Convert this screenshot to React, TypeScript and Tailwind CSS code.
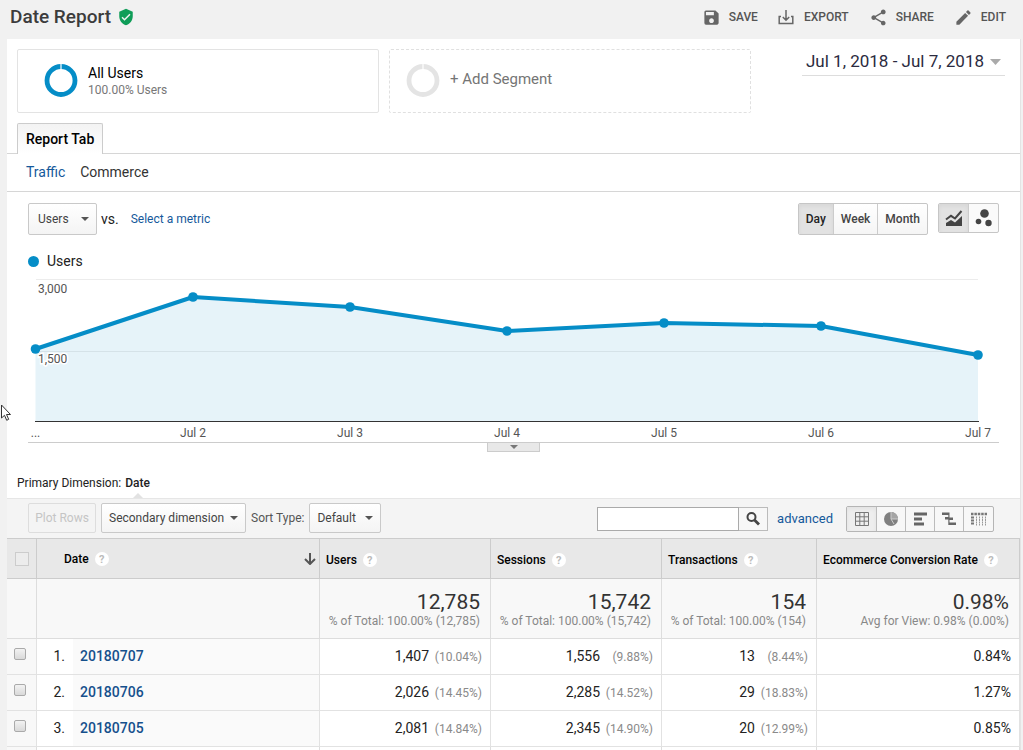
import React from "react";
import { MdSave, MdShare, MdEdit, MdVerifiedUser } from "react-icons/md";

const points = [
  { label: "...", x: 7.5, y: 75 },
  { label: "Jul 2", x: 165, y: 23 },
  { label: "Jul 3", x: 322, y: 33 },
  { label: "Jul 4", x: 479, y: 57 },
  { label: "Jul 5", x: 636, y: 49 },
  { label: "Jul 6", x: 793, y: 52 },
  { label: "Jul 7", x: 950, y: 81 },
];

const metrics = [
  { name: "Users", total: "12,785", note: "% of Total: 100.00% (12,785)" },
  { name: "Sessions", total: "15,742", note: "% of Total: 100.00% (15,742)" },
  { name: "Transactions", total: "154", note: "% of Total: 100.00% (154)" },
  { name: "Ecommerce Conversion Rate", total: "0.98%", note: "Avg for View: 0.98% (0.00%)" },
];

const rows = [
  { date: "20180707", cells: [["1,407", "(10.04%)"], ["1,556", "(9.88%)"], ["13", "(8.44%)"]], rate: "0.84%" },
  { date: "20180706", cells: [["2,026", "(14.45%)"], ["2,285", "(14.52%)"], ["29", "(18.83%)"]], rate: "1.27%" },
  { date: "20180705", cells: [["2,081", "(14.84%)"], ["2,345", "(14.90%)"], ["20", "(12.99%)"]], rate: "0.85%" },
];

function Ring({ color }: { color: string }) {
  return (
    <svg viewBox="0 0 34 34" className="h-[34px] w-[34px] shrink-0" fill="none" aria-hidden="true">
      <circle cx="17" cy="16.500" r="14" stroke={color} strokeWidth="4.800" />
      <path d="M17 0v6" stroke="#fff" strokeWidth="1.2" />
    </svg>
  );
}

function Caret({ className }: { className: string }) {
  return (
    <svg viewBox="0 0 10 5" className={className} preserveAspectRatio="none" aria-hidden="true">
      <path d="M0 0h10L5 5z" fill="currentColor" />
    </svg>
  );
}

function Dropdown({ id, label, value, className }: { id: string; label?: string; value: string; className: string }) {
  return (
    <div className="relative">
      <select
        id={id}
        aria-label={label}
        className={`appearance-none rounded-xs border border-[#c9c9c9] bg-linear-to-b from-white to-[#f4f4f4] pr-5 text-[#444] ${className}`}
      >
        <option>{value}</option>
      </select>
      <Caret className="pointer-events-none absolute top-1/2 right-2 -mt-0.5 h-1 w-2 text-[#555]" />
    </div>
  );
}

function Help() {
  return (
    <button
      aria-label="Help"
      className="ml-[3px] inline-flex h-[14px] w-[14px] items-center justify-center rounded-full bg-white align-middle text-[11px] leading-none font-bold text-[#bbb]"
    >
      ?
    </button>
  );
}

function Check({ label }: { label: string }) {
  return (
    <input
      type="checkbox"
      aria-label={label}
      className="mx-auto block h-3 w-3 appearance-none rounded-xs border border-[#aaa] bg-linear-to-b from-[#f2f2f2] to-[#d9d9d9]"
    />
  );
}

function ExportIcon() {
  return (
    <svg viewBox="0 0 16 16" className="h-4 w-4" fill="none" stroke="#666" strokeWidth="1.500" aria-hidden="true">
      <path d="M3 7.500H1.200v7h13.600v-7H13M8 1v10M4.800 8L8 11.200 11.200 8" />
    </svg>
  );
}

const viewIcons = [
  {
    name: "Data table",
    art: (
      <g fill="none" stroke="#777">
        <path d="M1.500 1.500h13v13h-13zM5.800 1.500v13M10.200 1.500v13M1.500 5.800h13M1.500 10.200h13" />
      </g>
    ),
  },
  {
    name: "Percentage",
    art: (
      <g>
        <circle cx="8" cy="8" r="7" fill="#808080" />
        <path d="M8 8V1a7 7 0 0 1 7 7z" fill="#a5a5a5" />
        <path d="M8 1v7h7M8 8l3 5" stroke="#ccc" fill="none" />
      </g>
    ),
  },
  { name: "Performance", art: <path d="M2 1.500h13v3H2zM2 6.500h8v3H2zM2 11.500h10v3H2z" fill="#666" /> },
  {
    name: "Comparison",
    art: <path d="M1 1.500h7V4H1zM4 6h4v2.500H4zM8 6.500h4V9H8zM8 11.500h7V14H8zM7.300 1.500h1.200v12.500H7.300z" fill="#666" />,
  },
  {
    name: "Pivot",
    art: (
      <g stroke="#777">
        <path d="M0 3h16" strokeWidth="2.500" strokeDasharray="2.500 .900" />
        <path d="M1.500 5.500v9" strokeWidth="3" strokeDasharray="2 1" />
        <path d="M5.500 5.500v9M8.500 5.500v9M11.500 5.500v9M14.500 5.500v9" strokeWidth="1" stroke="#999" strokeDasharray="2 .500" />
      </g>
    ),
  },
];

function Chart() {
  const line = points.map((p) => `${p.x},${p.y}`).join(" ");
  return (
    <svg viewBox="0 0 971 169" className="block h-auto w-full" role="img" aria-label="Users by day">
      <path d="M8 5.500h942M8 77.500h942" stroke="#ececec" />
      <polygon points={`7.5,147 ${line} 950,147`} fill="#058dc7" fillOpacity="0.1" />
      <path d="M7 147.500h944" stroke="#333" />
      <polyline points={line} fill="none" stroke="#058dc7" strokeWidth="4" strokeLinejoin="round" />
      {points.map((p) => (
        <circle key={p.label} cx={p.x} cy={p.y} r="4.800" fill="#058dc7" />
      ))}
      <g fontSize="12" fill="#545454">
        <text x="10" y="19">3,000</text>
        <text x="10" y="89" stroke="#fff" strokeWidth="3" paintOrder="stroke">1,500</text>
        {points.map((p) => (
          <text key={p.label} x={p.x} y="163" textAnchor="middle">{p.label}</text>
        ))}
      </g>
      <path d="M0 169h971" stroke="#ccc" strokeWidth="2" />
    </svg>
  );
}

export default function App() {
  return (
    <div
      className="relative min-h-screen bg-[#f1f1f1] pr-0.5 pl-[7px] text-[#222]"
      style={{ fontFamily: 'Roboto, "Liberation Sans", sans-serif' }}
    >
      <header className="flex h-[39px] items-center justify-between pr-[15px] pb-[5px] pl-[3px]">
        <h1 className="flex items-center gap-1.5 text-[19px] font-medium text-[#3c3c3c]">
          Date Report <MdVerifiedUser className="h-[18px] w-[18px] text-[#0f9d58]" />
        </h1>
        <nav className="flex items-center gap-5 text-[12px] font-medium text-[#555]">
          <button className="flex items-center gap-2"><MdSave className="h-[19px] w-[19px] text-[#666]" />SAVE</button>
          <button className="flex items-center gap-2.5"><ExportIcon />EXPORT</button>
          <button className="flex items-center gap-2"><MdShare className="h-[19px] w-[19px] text-[#666]" />SHARE</button>
          <button className="flex items-center gap-2"><MdEdit className="h-[19px] w-[19px] text-[#666]" />EDIT</button>
        </nav>
      </header>

      <main className="border-r border-[#e4e4e4] bg-white">
        <section className="flex px-2.5 pt-2.5">
          <div className="grid flex-1 grid-cols-2 gap-2.5">
            <button className="flex h-16 items-center gap-2.5 rounded-xs border border-[#e3e3e3] pl-[26px] text-left">
              <Ring color="#058dc7" />
              <span className="flex flex-col">
                <span className="text-[14px] leading-[18px] text-black">All Users</span>
                <span className="text-[12px] leading-4 text-[#777]">100.00% Users</span>
              </span>
            </button>
            <button className="flex h-16 items-center gap-2.5 rounded-xs border border-dashed border-[#e0e0e0] pl-4 text-left text-[15px] text-[#757575]">
              <Ring color="#e4e4e4" />
              <span className="pb-1">+ Add Segment</span>
            </button>
          </div>
          <div className="flex w-[259px] shrink-0 items-start justify-end pr-[5px]">
            <button className="flex h-[27px] items-center gap-1.5 border-b border-[#ddd] px-1 text-[17px] text-[#2b2b40]">
              Jul 1, 2018 - Jul 7, 2018 <Caret className="h-[6px] w-[11px] text-[#aaa]" />
            </button>
          </div>
        </section>

        <div className="flex border-b border-[#d6d6d6] px-2.5 pt-2.5">
          <button className="-mb-px h-[31px] rounded-t-xs border border-b-0 border-[#ccc] bg-linear-to-b from-[#f3f3f3] to-white px-2 text-[14px] font-medium text-black">
            Report Tab
          </button>
        </div>
        <nav className="flex h-[38px] items-center gap-[15px] border-b border-[#d6d6d6] px-[19px] text-[14px]">
          <a href="#traffic" className="text-[#15599b]">Traffic</a>
          <a href="#commerce" className="text-[#333]">Commerce</a>
        </nav>

        <section className="px-[21px] pt-[11px]">
          <div className="flex h-8 items-start justify-between">
            <div className="flex items-center text-[12px]">
              <Dropdown id="metric" label="Metric" value="Users" className="h-8 w-[69px] pl-[9px] text-[12px]" />
              <span className="pr-3 pl-1 text-[14px]">vs.</span>
              <a href="#metric" className="text-[#15599b]">Select a metric</a>
            </div>
            <div className="flex items-start gap-2.5">
              <div className="flex h-8 divide-x divide-[#ccc] overflow-hidden rounded-xs border border-[#c6c6c6] bg-linear-to-b from-white to-[#f5f5f5] text-[12px] font-medium">
                <button className="bg-[#e2e2e2] px-[7px] inset-shadow-sm">Day</button>
                <button className="px-[7px] text-[#444]">Week</button>
                <button className="px-[7px] text-[#444]">Month</button>
              </div>
              <div className="flex h-[30px] divide-x divide-[#ccc] overflow-hidden rounded-xs border border-[#c6c6c6] bg-[#fafafa]">
                <button aria-label="Line chart" className="flex w-[30px] items-center justify-center bg-[#e2e2e2] inset-shadow-sm">
                  <svg viewBox="0 0 18 18" className="h-[18px] w-[18px]">
                    <path d="M1 17v-3l5-3 4 2.500L17 7v10z" fill="#444" />
                    <path d="M1 10.500l5-3.700 4 2.700L16.500 2" fill="none" stroke="#444" strokeWidth="2" />
                  </svg>
                </button>
                <button aria-label="Motion chart" className="flex w-[29px] items-center justify-center">
                  <svg viewBox="0 0 18 18" className="h-[18px] w-[18px]" fill="#444">
                    <circle cx="9.500" cy="4.500" r="4.300" />
                    <circle cx="3.500" cy="12.500" r="2.800" />
                    <circle cx="13.500" cy="14" r="3.200" />
                  </svg>
                </button>
              </div>
            </div>
          </div>

          <div className="flex h-[39px] items-center gap-2 pt-3.5 text-[14px]">
            <span className="h-[11px] w-[11px] rounded-full bg-[#058dc7]" />Users
          </div>
          <Chart />
          <button
            aria-label="Expand chart"
            className="mx-auto flex h-[9px] w-[53px] justify-center border border-t-0 border-[#ccc] bg-[#e8e8e8] pt-0.5"
          >
            <Caret className="h-1 w-2 text-[#777]" />
          </button>
        </section>

        <div className="flex h-[46px] items-end gap-1 px-2.5 text-[12px]">
          <span className="pb-1.5">Primary Dimension:</span>
          <span className="relative pb-1.5 font-medium">
            Date
            <Caret className="absolute bottom-0 left-1/2 -ml-[5px] h-[5px] w-2.5 rotate-180 text-[#e2e2e2]" />
          </span>
        </div>

        <div className="flex h-10 items-center justify-between border-t border-[#e6e6e6] bg-[#f4f4f4] pr-[26px] pl-[21px] text-[12px]">
          <div className="flex items-center gap-[5px] pb-0.5 text-[#555]">
            <button disabled className="h-[30px] w-[68px] rounded-xs border border-[#ddd] text-[#c5c5c5]">Plot Rows</button>
            <Dropdown id="dimension" label="Secondary dimension" value="Secondary dimension" className="h-[30px] w-[145px] pl-[7px]" />
            <label htmlFor="sort-type">Sort Type:</label>
            <Dropdown id="sort-type" value="Default" className="h-[30px] w-[72px] pl-[7px]" />
          </div>
          <div className="flex items-center">
            <input aria-label="Search table" className="h-6 w-[142px] border border-[#aaa] bg-white px-1" />
            <button aria-label="Search" className="flex h-6 w-[29px] items-center justify-center border border-l-0 border-[#bbb] bg-[#f7f7f7]">
              <svg viewBox="0 0 16 16" className="h-4 w-4" fill="none" stroke="#444" aria-hidden="true">
                <circle cx="6.500" cy="6" r="4" strokeWidth="2" />
                <path d="M9.500 9l4.500 4.500" strokeWidth="2.800" />
              </svg>
            </button>
            <a href="#advanced" className="px-[9px] text-[13px] text-[#15599b]">advanced</a>
            <div className="ml-1 flex divide-x divide-[#bbb] rounded-xs border border-[#b5b5b5] bg-[#f7f7f7]">
              {viewIcons.map((v, i) => (
                <button
                  key={v.name}
                  aria-label={v.name}
                  className={`flex h-6 items-center justify-center ${i === 0 ? "w-[30px] bg-[#eee] inset-shadow-sm" : "w-[29px]"}`}
                >
                  <svg viewBox="0 0 16 16" className="h-4 w-4">{v.art}</svg>
                </button>
              ))}
            </div>
          </div>
        </div>

        <table className="w-full table-fixed border-separate border-spacing-0 text-[14px]">
          <colgroup>
            <col className="w-[30px]" />
            <col className="w-9" />
            <col />
            <col className="w-[171px]" />
            <col className="w-[171px]" />
            <col className="w-[155px]" />
            <col className="w-[203px]" />
          </colgroup>
          <thead>
            <tr className="h-[41px] bg-[#e8e8e8] text-left text-[12px] text-black [&>th]:border-y [&>th]:border-r [&>th]:border-[#ccc] [&>th]:p-0 [&>th]:font-medium">
              <th>
                <input type="checkbox" aria-label="Select all rows" disabled className="mx-auto block h-3.5 w-3.5 appearance-none border border-[#ccc] bg-[#ececec]" />
              </th>
              <th colSpan={2}>
                <div className="flex items-center justify-between pr-[3px] pl-[27px]">
                  <span>Date <Help /></span>
                  <svg viewBox="0 0 12 12" className="h-3 w-3" fill="none" stroke="#555" strokeWidth="2" aria-label="Sorted descending">
                    <path d="M6 0v11M1 6l5 5 5-5" />
                  </svg>
                </div>
              </th>
              {metrics.map((m) => (
                <th key={m.name}><div className="pt-0.5 pl-1.5 whitespace-nowrap">{m.name} <Help /></div></th>
              ))}
            </tr>
          </thead>
          <tbody>
            <tr className="h-[60px] bg-[#f8f8f8] text-right [&>td]:border-r [&>td]:border-b [&>td]:border-[#ddd] [&>td]:p-0">
              <td />
              <td colSpan={2} />
              {metrics.map((m) => (
                <td key={m.name}>
                  <div className="pt-0.5 pr-2.5 whitespace-nowrap">
                    <div className="text-[21px] leading-[22px] text-[#333]">{m.total}</div>
                    <div className="text-[12px] leading-4 text-[#888]">{m.note}</div>
                  </div>
                </td>
              ))}
            </tr>
            {rows.map((r, i) => (
              <tr key={r.date} className="h-9 text-right [&>td]:border-b [&>td]:border-[#e2e2e2] [&>td]:p-0">
                <td className="border-r bg-[#f8f8f8]"><div className="pr-1 pb-1.5"><Check label={`Select ${r.date}`} /></div></td>
                <td><div className="pr-2">{i + 1}.</div></td>
                <td className="border-r bg-[#fafafa] text-left">
                  <a href={`#${r.date}`} className="pl-[7px] font-medium text-[#15508c]">{r.date}</a>
                </td>
                {r.cells.map(([value, share], c) => (
                  <td key={c} className="border-r">
                    <div className="flex items-baseline justify-end pr-2">
                      {value}<span className="w-[53px] text-[12px] text-[#8a8a8a]">{share}</span>
                    </div>
                  </td>
                ))}
                <td className="border-r"><div className="pr-2">{r.rate}</div></td>
              </tr>
            ))}
            <tr className="h-1 [&>td]:border-r [&>td]:border-[#ddd] [&>td]:p-0">
              <td className="bg-[#f8f8f8]" />
              <td colSpan={2} />
              <td /><td /><td /><td />
            </tr>
          </tbody>
        </table>
      </main>

      <svg viewBox="0 0 12 18" className="pointer-events-none absolute top-[404px] left-0 h-[18px] w-3" aria-hidden="true">
        <path d="M1.500 1v13l3-2.700 2.200 5 2-1-2.200-4.800h4z" fill="#fff" stroke="#333" />
      </svg>
    </div>
  );
}
